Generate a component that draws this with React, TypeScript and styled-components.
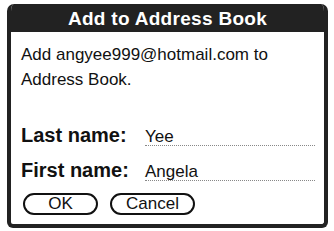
import React from "react";
import styled, { createGlobalStyle } from "styled-components";

const Global = createGlobalStyle`
  html, body { margin: 0; padding: 0; background: #fff; }
  body { font-family: "Liberation Sans", Arial, sans-serif; }
`;

const Dialog = styled.div`
  box-sizing: border-box;
  margin: 4px 0 0 7px;
  width: 321px;
  height: 224px;
  border: 4px solid #222;
  border-top: 0;
  border-radius: 7px 7px 6px 6px;
  background: #fff;
  display: flex;
  flex-direction: column;
  overflow: hidden;
`;

const TitleBar = styled.div`
  height: 28px;
  margin: 0 -4px;
  background: #222;
  color: #fff;
  font-weight: bold;
  font-size: 19px;
  display: flex;
  align-items: center;
  justify-content: center;
  letter-spacing: 0.3px;
  padding-top: 1px;
  box-sizing: border-box;
`;

const Body = styled.div`
  padding: 10px 9px 0 10px;
  display: flex;
  flex-direction: column;
`;

const Message = styled.div`
  font-size: 17px;
  line-height: 25px;
  color: #111;
  height: 72px;
`;

const Row = styled.div<{ $top: number }>`
  display: flex;
  align-items: baseline;
  margin-top: ${(p) => p.$top}px;
  height: 25px;
`;

const Label = styled.div`
  width: 124px;
  flex: none;
  font-weight: bold;
  font-size: 20px;
  color: #111;
  line-height: 25px;
`;

const Field = styled.div`
  flex: 1;
  font-size: 17px;
  line-height: 16px;
  color: #111;
  border-bottom: 1px dotted #888;
`;

const Buttons = styled.div`
  display: flex;
  gap: 12px;
  margin-top: 10px;
  padding-left: 2px;
`;

const Button = styled.div<{ $w: number }>`
  box-sizing: border-box;
  width: ${(p) => p.$w}px;
  height: 22px;
  border: 2px solid #111;
  border-radius: 11px;
  font-size: 17px;
  display: flex;
  align-items: center;
  justify-content: center;
  color: #111;
`;

export default function App() {
  return (
    <>
      <Global />
      <Dialog>
        <TitleBar>Add to Address Book</TitleBar>
        <Body>
          <Message>
            Add angyee999@hotmail.com to
            <br />
            Address Book.
          </Message>
          <Row $top={9}>
            <Label>Last name:</Label>
            <Field>Yee</Field>
          </Row>
          <Row $top={10}>
            <Label>First name:</Label>
            <Field>Angela</Field>
          </Row>
          <Buttons>
            <Button $w={75}>OK</Button>
            <Button $w={85}>Cancel</Button>
          </Buttons>
        </Body>
      </Dialog>
    </>
  );
}
